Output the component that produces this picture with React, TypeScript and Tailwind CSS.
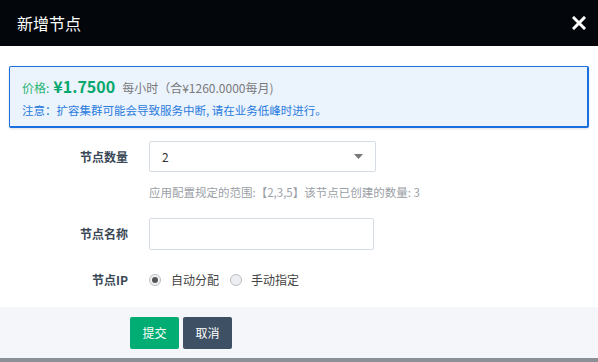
import React from 'react';

const font = { fontFamily: '"Noto Sans CJK SC", "Noto Sans", sans-serif' };

const App = () => {
  return (
    <div className="w-[598px] h-[362px] bg-white flex flex-col overflow-hidden" style={font}>
      <div className="h-[46px] bg-[#03070b] flex items-center justify-between pl-[17px] pr-[12px]">
        <span className="text-white text-[16px] font-normal">新增节点</span>
        <svg width="14" height="14" viewBox="0 0 14 14">
          <path d="M2 2 L12 12 M12 2 L2 12" stroke="#fff" strokeWidth="3" strokeLinecap="square" />
        </svg>
      </div>

      <div className="px-[9px] pt-[20px]">
        <div className="h-[62px] border border-[#1a6fdf] border-r-2 border-b-2 bg-[#ebf3fd] rounded-[2px] shadow-sm px-[12px] flex flex-col justify-center gap-[4px]">
          <div className="flex items-baseline">
            <span className="text-[12px] text-[#2bb673]">价格:</span>
            <span className="text-[16px] font-bold text-[#05a86c] ml-[4px]">¥1.7500</span>
            <span className="text-[12px] text-[#7a7a7a] ml-[7px]">每小时（合¥1260.0000每月)</span>
          </div>
          <div className="text-[11.5px] text-[#2a7bde]">注意：扩容集群可能会导致服务中断, 请在业务低峰时进行。</div>
        </div>
      </div>

      <div className="flex flex-col pt-[13px]">
        <div className="flex items-center">
          <div className="w-[128px] text-right text-[12px] font-semibold text-[#3b4856]">节点数量</div>
          <div className="ml-[21px] w-[227px] h-[31px] border border-[#d5dce4] rounded-[2px] flex items-center justify-between px-[12px]">
            <span className="text-[12px] text-[#333]">2</span>
            <svg width="9" height="5" viewBox="0 0 9 5">
              <path d="M0 0 L9 0 L4.5 5 Z" fill="#777" />
            </svg>
          </div>
        </div>
        <div className="ml-[149px] mt-[12px] text-[11.5px] text-[#9aa0a6]">应用配置规定的范围:【2,3,5】该节点已创建的数量: 3</div>

        <div className="flex items-center mt-[17px]">
          <div className="w-[128px] text-right text-[12px] font-semibold text-[#3b4856]">节点名称</div>
          <div className="ml-[21px] w-[225px] h-[32px] border border-[#d5dce4] rounded-[2px]" />
        </div>

        <div className="flex items-center mt-[21px]">
          <div className="w-[128px] text-right text-[12px] font-semibold text-[#3b4856]">节点IP</div>
          <div className="ml-[21px] flex items-center text-[12px] text-[#444]">
            <span className="w-[12px] h-[12px] rounded-full border border-[#b9bec4] bg-[#f1f2f4] flex items-center justify-center">
              <span className="w-[6px] h-[6px] rounded-full bg-[#555]" />
            </span>
            <span className="ml-[10px]">自动分配</span>
            <span className="ml-[11px] w-[12px] h-[12px] rounded-full border border-[#b9bec4] bg-[#eceef1]" />
            <span className="ml-[9px]">手动指定</span>
          </div>
        </div>
      </div>

      <div className="mt-[18px] h-[51px] bg-[#f4f6f9] flex items-center pl-[130px] gap-[4px]">
        <button className="w-[49px] h-[32px] rounded-[2px] bg-[#01ad72] text-white text-[12px]">提交</button>
        <button className="w-[49px] h-[32px] rounded-[2px] bg-[#3d5064] text-white text-[12px]">取消</button>
      </div>
      <div className="flex-1 bg-[#8b9096]" />
    </div>
  );
};

export default App;
